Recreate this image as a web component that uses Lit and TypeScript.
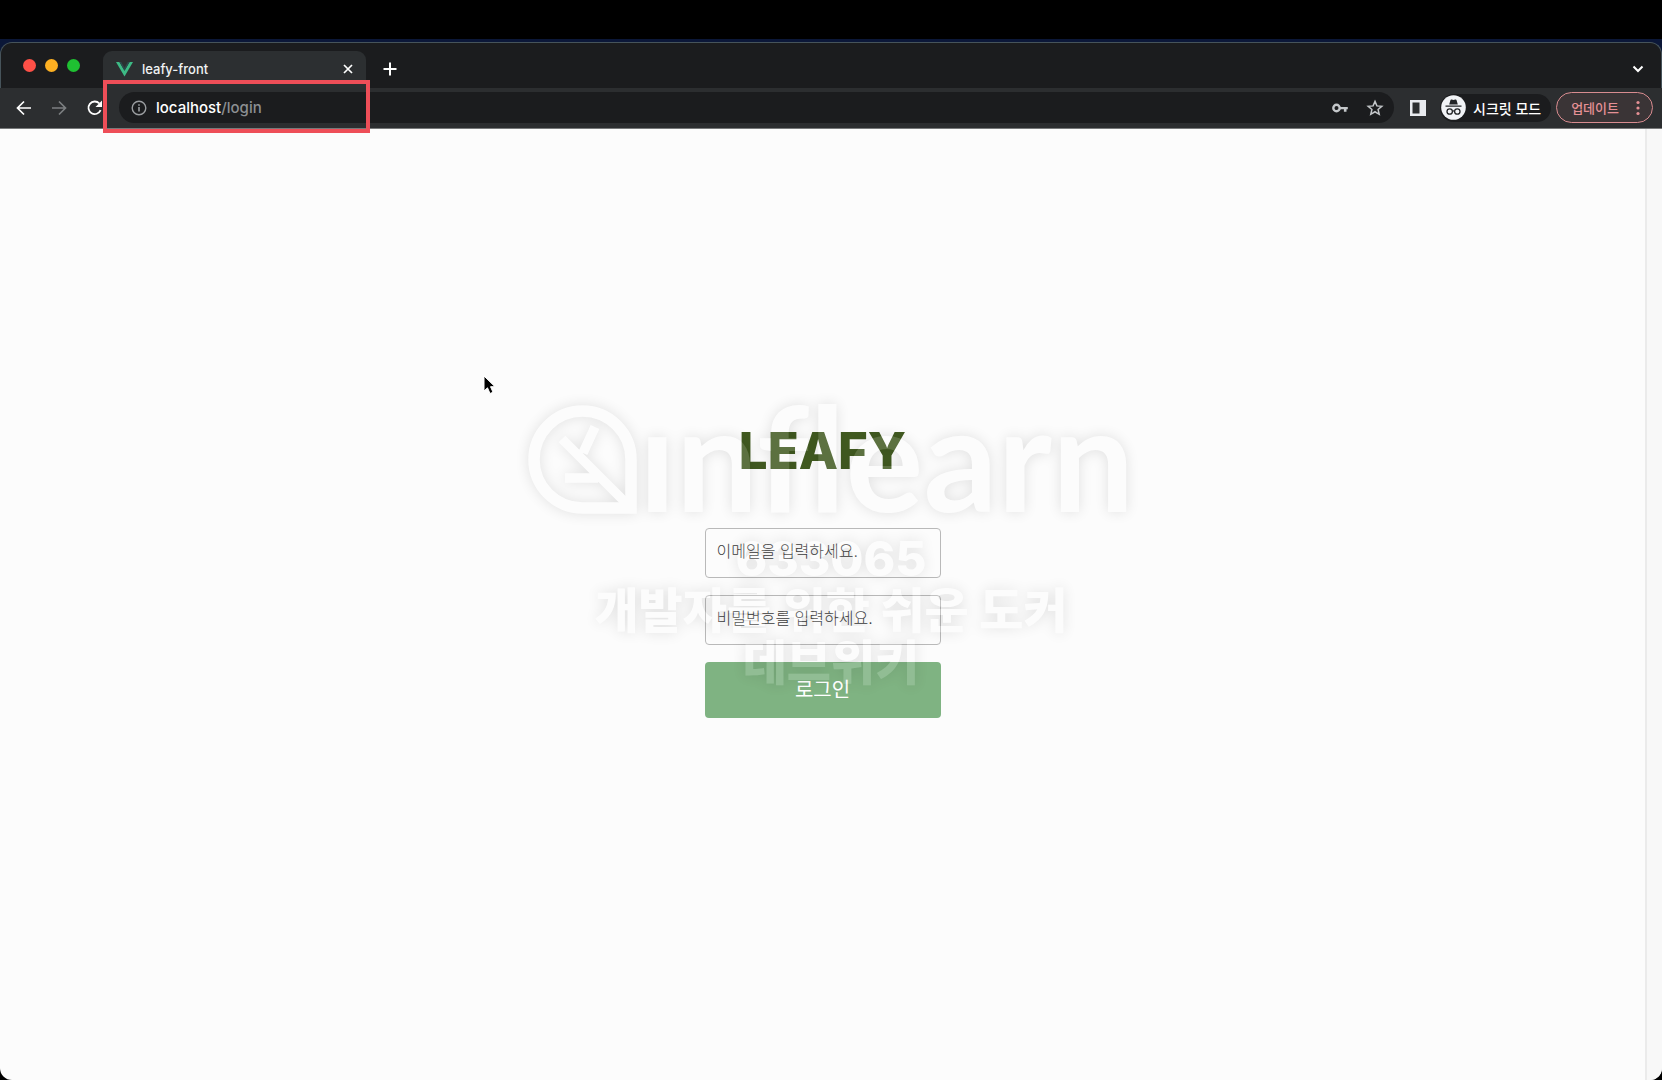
import { LitElement, html, css } from "lit";
import { customElement } from "lit/decorators.js";

@customElement("browser-chrome")
class BrowserChrome extends LitElement {
  static styles = css`
    :host { display: block; color: #fff; font-family: Inter, "Noto Sans CJK KR", sans-serif; }
    * { box-sizing: border-box; }
    button { background: none; border: 0; padding: 0; margin: 0; color: inherit; font: inherit; display: flex; align-items: center; justify-content: center; flex: none; }
    svg { display: block; flex: none; }
    .tabs { display: flex; align-items: flex-end; height: 46px; background: #1b1c1e; border: 1px solid #46535a; border-bottom: 0; border-radius: 12px 12px 0 0; padding: 0 14px 0 22px; }
    .lights { display: flex; gap: 9px; padding-bottom: 16px; margin-right: 23px; }
    .light { width: 13px; height: 13px; border-radius: 50%; }
    .red { background: #fe5047; }
    .amber { background: #fdb022; }
    .green { background: #1fc132; }
    .tab { display: flex; align-items: center; width: 263px; height: 37px; padding: 0 9px 2px 13px; background: #2c2f31; border-radius: 9px 9px 0 0; font-size: 13px; font-weight: 500; }
    .title { flex: 1; margin-left: 9px; color: #f1f3f4; }
    .icon { width: 18px; height: 37px; padding-bottom: 2px; }
    .close { padding: 0; }
    .new { margin-left: 15px; }
    .more { margin-left: auto; }
    .bar { display: flex; align-items: center; height: 41px; background: #2c2e30; border-bottom: 1px solid #77797a; padding: 0 9px 1px 15px; }
    .nav { display: flex; gap: 17px; margin-right: 16px; }
    .address { display: flex; align-items: center; flex: 1; height: 31px; border-radius: 16px; background: #1b1c1e; padding: 0 10px 0 11px; }
    .url { flex: 1; margin-left: 8px; font-size: 15px; font-weight: 500; color: #fff; }
    .path { color: #8c8f92; }
    .actions { display: flex; gap: 17px; }
    .panel { margin: 0 13px 0 15px; }
    .mode { display: flex; align-items: center; gap: 7px; height: 28px; padding: 0 10px 0 1px; border-radius: 14px; background: #1b1c1e; font-size: 14px; font-weight: 500; }
    .update { gap: 13px; margin-left: 5px; height: 31px; padding: 0 8px 0 14px; border: 1px solid #d98c90; border-radius: 16px; background: #3a3436; color: #e59095; font-size: 13px; font-weight: 500; }
  `;
  render() {
    return html`
      <div class="tabs">
        <div class="lights"><span class="light red"></span><span class="light amber"></span><span class="light green"></span></div>
        <div class="tab">
          <svg width="17" height="16" viewBox="0 0 17 16"><path d="M0 1h3.400l5.100 8.800L13.600 1H17L8.500 15.600z" fill="#3dba85"/><path d="M3.400 1h1.800l3.300 5.700L11.800 1h1.800L8.500 9.800z" fill="#2b4a4c"/></svg>
          <span class="title">leafy-front</span>
          <button class="icon close" aria-label="Close tab"><svg width="10" height="10" viewBox="0 0 10 10" stroke="#fff" stroke-width="1.700"><path d="M1 1l8 8M9 1l-8 8"/></svg></button>
        </div>
        <button class="icon new" aria-label="New tab"><svg width="14" height="14" viewBox="0 0 14 14" stroke="#fff" stroke-width="2"><path d="M7 .5v13M.5 7h13"/></svg></button>
        <button class="icon more" aria-label="Search tabs"><svg width="12" height="8" viewBox="0 0 12 8" fill="none" stroke="#fff" stroke-width="2"><path d="M1.500 1.500L6 6l4.500-4.500"/></svg></button>
      </div>
      <div class="bar">
        <div class="nav">
          <button aria-label="Back"><svg width="18" height="18" viewBox="0 0 18 18" fill="none" stroke="#fff" stroke-width="1.700"><path d="M16 9H3M9 2.500L2.500 9 9 15.500"/></svg></button>
          <button aria-label="Forward"><svg width="18" height="18" viewBox="0 0 18 18" fill="none" stroke="#7c7f81" stroke-width="1.700"><path d="M2 9h13M9 2.500L15.500 9 9 15.500"/></svg></button>
          <button aria-label="Reload"><svg width="18" height="18" viewBox="0 0 18 18"><path d="M15.600 11.200A6.300 6.300 0 1 1 14.400 4.500" fill="none" stroke="#fff" stroke-width="1.800"/><path d="M17 1.500v6.500H10.500z" fill="#fff"/></svg></button>
        </div>
        <div class="address">
          <svg width="18" height="18" viewBox="0 0 18 18"><circle cx="9" cy="9" r="6.800" fill="none" stroke="#9a9da0" stroke-width="1.400"/><path d="M9 8v4.500M9 5.200v1.600" stroke="#9a9da0" stroke-width="1.600"/></svg>
          <span class="url">localhost<span class="path">/login</span></span>
          <div class="actions">
            <button aria-label="Passwords"><svg width="18" height="18" viewBox="0 0 18 18"><circle cx="5.500" cy="9" r="3.200" fill="none" stroke="#c4c7ca" stroke-width="2.400"/><path d="M9 7.900h7.800v2.400h-1.300v2.500h-2.600v-2.500H9z" fill="#c4c7ca"/></svg></button>
            <button aria-label="Bookmark"><svg width="18" height="18" viewBox="0 0 18 18"><path d="M9 2.400l1.900 4.500 4.900.4-3.700 3.200 1.100 4.800L9 12.750l-4.200 2.550 1.100-4.800-3.700-3.200 4.900-.4z" fill="none" stroke="#c4c7ca" stroke-width="1.500"/></svg></button>
          </div>
        </div>
        <button class="panel" aria-label="Side panel"><svg width="18" height="18" viewBox="0 0 18 18"><path d="M1 1h16v16H1z" fill="#e9ebef"/><path d="M3.500 3.500h7v11h-7z" fill="#2c2e30"/></svg></button>
        <div class="mode">
          <svg width="25" height="25" viewBox="0 0 25 25"><circle cx="12.500" cy="12.500" r="12.300" fill="#f1f3f6"/><path d="M8.200 9.500L9.500 5q.3-.8 1.200-.5l1.800.5 1.800-.5q.9-.3 1.200.5l1.300 4.500zM4.500 10.500h16v1.300h-16z" fill="#222427"/><g fill="none" stroke="#222427" stroke-width="1.300"><circle cx="8.700" cy="16.500" r="2.700"/><circle cx="16.300" cy="16.500" r="2.700"/><path d="M11.400 16.200q1.100-.8 2.200 0"/></g></svg>
          <span>시크릿 모드</span>
        </div>
        <button class="update"><span>업데이트</span><svg width="12" height="16" viewBox="0 0 12 16" fill="#e59095"><circle cx="6" cy="2.500" r="1.600"/><circle cx="6" cy="8" r="1.600"/><circle cx="6" cy="13.500" r="1.600"/></svg></button>
      </div>`;
  }
}

@customElement("login-form")
class LoginForm extends LitElement {
  static styles = css`
    :host { display: block; }
    form { display: flex; flex-direction: column; align-items: center; gap: 17px; margin: 0; }
    h1 { margin: 0 0 30px; font: 800 51px/60px Inter, sans-serif; color: #415a20; }
    input, button { box-sizing: border-box; width: 236px; border-radius: 4px; font-family: Inter, "Noto Sans CJK KR", sans-serif; margin: 0; }
    input { height: 50px; padding: 0 11px 4px; border: 1px solid #b9b9b9; background: transparent; font-size: 16px; font-weight: 300; }
    input::placeholder { color: #3c3c3c; opacity: 1; }
    button { height: 56px; padding: 0 0 4px; border: 0; background: #7fb382; color: #fff; font-size: 20px; font-weight: 400; }
  `;
  render() {
    return html`<form @submit=${(e: Event) => e.preventDefault()}>
      <h1>LEAFY</h1>
      <input type="email" aria-label="이메일" placeholder="이메일을 입력하세요.">
      <input type="password" aria-label="비밀번호" placeholder="비밀번호를 입력하세요.">
      <button type="submit">로그인</button>
    </form>`;
  }
}

@customElement("course-watermark")
class CourseWatermark extends LitElement {
  static styles = css`
    :host { display: flex; flex-direction: column; align-items: center; opacity: 0.14; color: #fff; pointer-events: none; filter: drop-shadow(0 0 7px rgba(0, 0, 0, 0.8)); }
    .brand { display: flex; align-items: flex-end; gap: 1px; height: 110px; }
    .word { font: 700 146px/150px Lato, sans-serif; font-variant-ligatures: none; height: 134px; }
    .lines { margin-top: 18px; text-align: center; font: 800 48px/52px Inter, "Noto Sans CJK KR", sans-serif; }
  `;
  render() {
    return html`
      <div class="brand">
        <svg width="110" height="110" viewBox="0 0 110 110" fill="none" stroke="#fff"><path d="M103 54.500A48.500 48.500 0 1 0 54.500 103H103z" stroke-width="11.500"/><path d="M34 34L101 101M67 22L55 48M37 73h33" stroke-width="9.500"/></svg>
        <span class="word">ınflearn</span>
      </div>
      <div class="lines"><div>633065</div><div>개발자를 위한 쉬운 도커</div><div>데브위키</div></div>`;
  }
}

@customElement("app-root")
class AppRoot extends LitElement {
  static styles = css`
    :host { display: block; }
    .desktop { box-sizing: border-box; position: relative; display: flex; flex-direction: column; min-height: 100vh; background: #000; border-top: 39px solid #000; overflow: hidden; }
    .window { display: flex; flex-direction: column; flex: 1; padding-top: 3px; background: linear-gradient(#0b1738 0 18px, #000 18px); }
    .page { display: flex; flex: 1; background: #fcfcfc; border-radius: 0 0 12px 12px; overflow: hidden; }
    .content { flex: 1; padding-top: 292px; }
    .scroll { box-sizing: border-box; width: 17px; background: #f8f8f8; border-left: 2px solid #ebebeb; }
    .highlight { position: absolute; left: 103px; top: 41px; box-sizing: border-box; width: 267px; height: 53px; border: 4px solid #ee4e58; }
    .mark { position: absolute; left: 0; right: 0; top: 366px; }
    .pointer { position: absolute; left: 483px; top: 336px; }
  `;
  render() {
    return html`<div class="desktop">
      <div class="window">
        <browser-chrome></browser-chrome>
        <main class="page">
          <div class="content"><login-form></login-form></div>
          <div class="scroll"></div>
        </main>
      </div>
      <div class="highlight"></div>
      <course-watermark class="mark"></course-watermark>
      <svg class="pointer" width="14" height="20" viewBox="0 0 14 20"><path d="M1 1v15l3.500-3.200 2.500 5.700 3-1.300-2.500-5.500H12z" fill="#000" stroke="#fff" stroke-width="1"/></svg>
    </div>`;
  }
}
